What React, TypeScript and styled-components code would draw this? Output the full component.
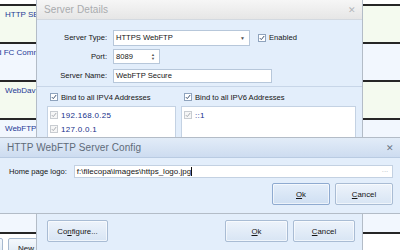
import React from 'react';
import styled, { createGlobalStyle } from 'styled-components';

const GlobalStyle = createGlobalStyle`
  html, body { margin: 0; padding: 0; background: #fff; }
  body {
    font-family: 'Liberation Sans', Arial, sans-serif;
    font-size: 7.6px;
    color: #141414;
    overflow: hidden;
  }
  * { box-sizing: border-box; }
`;

const Stage = styled.div`
  position: relative;
  width: 400px;
  height: 250px;
  overflow: hidden;
  background: #fff;
`;

/* ---------- background grid ---------- */

const Grid = styled.div`
  padding-top: 4px;
`;

const GridBody = styled.div`
  border-bottom: 2px solid #262626;
`;

const GridRow = styled.div<{ $alt?: boolean }>`
  height: 38px;
  border-top: 2px solid #262626;
  background: ${(p) => (p.$alt ? '#f2f7fe' : '#f4faef')};
`;

const GridCell = styled.div<{ $shift?: number }>`
  width: 36px;
  overflow: hidden;
  white-space: nowrap;
  padding-top: 4px;
  line-height: 9px;
  font-size: 8px;
  color: #1f3a96;
  span {
    display: inline-block;
    margin-left: ${(p) => p.$shift ?? 5}px;
  }
`;

const Footer = styled.div`
  display: flex;
  gap: 5px;
  padding-top: 4px;
  margin-left: -25px;
`;

const PlainButton = styled.div`
  width: 28px;
  height: 20px;
  border: 1px solid #a7b9cf;
  border-radius: 2px;
  background: linear-gradient(#f4f8fc, #dbe7f4);
  padding-left: 9px;
  line-height: 20px;
  font-size: 8px;
  &:last-child { width: 50px; }
`;

/* ---------- windows ---------- */

const Window = styled.div<{ $left: number; $top: number; $width: number; $height: number }>`
  position: absolute;
  left: ${(p) => p.$left}px;
  top: ${(p) => p.$top}px;
  width: ${(p) => p.$width}px;
  height: ${(p) => p.$height}px;
  display: flex;
  flex-direction: column;
  background: #e3eefb;
  border: 1px solid #b3bcc7;
`;

const TitleBar = styled.div<{ $active?: boolean }>`
  height: 20px;
  flex: none;
  display: flex;
  align-items: center;
  justify-content: space-between;
  padding: 0 6px 0 7px;
  background: ${(p) =>
    p.$active ? 'linear-gradient(#e2ecf8, #cddcf0)' : 'linear-gradient(#f6f6f6, #e6e6e6)'};
  border-bottom: 1px solid ${(p) => (p.$active ? '#b9cbe2' : '#d3d9e0')};
`;

const Title = styled.div<{ $active?: boolean }>`
  font-size: 10px;
  letter-spacing: 0.1px;
  color: ${(p) => (p.$active ? '#5f6b79' : '#a9abae')};
`;

const CloseX = styled.div<{ $active?: boolean }>`
  font-size: 9px;
  color: ${(p) => (p.$active ? '#6c7684' : '#b3b6ba')};
`;

/* ---------- form controls ---------- */

const FormGrid = styled.div`
  display: grid;
  grid-template-columns: 70px 1fr;
  grid-auto-rows: 19px;
  column-gap: 6px;
  align-items: center;
  padding: 8px 0 1px 0;
`;

const Label = styled.div`
  text-align: right;
`;

const Inline = styled.div`
  display: flex;
  align-items: center;
  gap: 8px;
`;

const Field = styled.div<{ $width: number; $height: number }>`
  width: ${(p) => p.$width}px;
  height: ${(p) => p.$height}px;
  background: #fff;
  border: 1px solid #b7c7da;
  display: flex;
  align-items: center;
  justify-content: space-between;
  padding: 0 4px 0 2px;
`;

const Arrow = styled.span`
  font-size: 5px;
  color: #555;
`;

const Spin = styled.span`
  display: flex;
  flex-direction: column;
  font-size: 4px;
  line-height: 4px;
  color: #555;
`;

const CheckRow = styled.label`
  display: flex;
  align-items: center;
  gap: 3px;
`;

const Box = styled.span<{ $muted?: boolean }>`
  width: 8px;
  height: 8px;
  flex: none;
  border: 1px solid ${(p) => (p.$muted ? '#c8ccd1' : '#8fa3bd')};
  background: ${(p) => (p.$muted ? '#f6f6f6' : '#fff')};
  display: flex;
  align-items: center;
  justify-content: center;
`;

const Check = ({ muted }: { muted?: boolean }) => (
  <Box $muted={muted}>
    <svg width="6" height="6" viewBox="0 0 6 6">
      <path d="M0.8 3.1 L2.3 4.6 L5.2 1" fill="none" stroke={muted ? '#a8adb3' : '#3e5372'} strokeWidth="1" />
    </svg>
  </Box>
);

const Lower = styled.div`
  border-top: 1px solid #c8d6e8;
  display: grid;
  grid-template-columns: 129px 175px;
  column-gap: 5px;
  padding: 4px 0 0 10px;
`;

const Group = styled.div`
  display: flex;
  flex-direction: column;
  gap: 3px;
`;

const GroupHead = styled(CheckRow)`
  height: 12px;
  padding-left: 3px;
`;

const ListBox = styled.div`
  height: 108px;
  background: #fff;
  border: 1px solid #c4d2e3;
  padding: 1px 2px;
`;

const ListItem = styled(CheckRow)`
  height: 14px;
  font-size: 8px;
  letter-spacing: 0.3px;
  color: #16308a;
`;

const ButtonRow = styled.div<{ $pad: string }>`
  display: flex;
  gap: 5px;
  padding: ${(p) => p.$pad};
`;

const Spacer = styled.div`
  flex: 1;
`;

const Button = styled.div<{ $width: number; $focus?: boolean }>`
  width: ${(p) => p.$width}px;
  height: 22px;
  display: flex;
  align-items: center;
  justify-content: center;
  border: 1px solid ${(p) => (p.$focus ? '#8eaad0' : '#a9bcd4')};
  border-radius: 2px;
  background: ${(p) =>
    p.$focus ? 'linear-gradient(#e4eefa, #cfdff2)' : 'linear-gradient(#edf3fb, #d8e5f4)'};
  box-shadow: inset 0 0 0 1px rgba(255, 255, 255, 0.6);
  font-size: 7.8px;
`;

const ConfigBody = styled.div`
  display: flex;
  flex-direction: column;
  gap: 5px;
  padding: 7px 7px 0 9px;
`;

const InputRow = styled.div`
  display: flex;
  align-items: center;
  gap: 7px;
`;

const PathInput = styled.div`
  flex: 1;
  height: 13px;
  background: #fff;
  border: 1px solid #c3d1e2;
  display: flex;
  align-items: center;
  justify-content: space-between;
  padding: 0 4px 0 2px;
  font-size: 8px;
`;

const Caret = styled.span`
  display: inline-block;
  width: 1px;
  height: 9px;
  background: #111;
  vertical-align: middle;
`;

const Dots = styled.span`
  color: #b9c0c9;
  letter-spacing: -0.5px;
`;

// rows 5 and 6 sit fully under the config window
const rows = [
  { text: 'HTTP SER' },
  { text: 'd FC Comm', shift: -3 },
  { text: 'WebDav' },
  { text: 'WebFTP' },
  { text: '' },
  { text: '' },
];

export default function App() {
  return (
    <Stage>
      <GlobalStyle />
      <Grid>
        <GridBody>
          {rows.map((r, i) => (
            <GridRow key={i} $alt={i % 2 === 1}>
              <GridCell $shift={r.shift}>
                <span>{r.text}</span>
              </GridCell>
            </GridRow>
          ))}
        </GridBody>
        <Footer>
          <PlainButton />
          <PlainButton>New</PlainButton>
        </Footer>
      </Grid>

      <Window $left={36} $top={-1} $width={327} $height={262}>
        <TitleBar>
          <Title>Server Details</Title>
          <CloseX>✕</CloseX>
        </TitleBar>
        <FormGrid>
          <Label>Server Type:</Label>
          <Inline>
            <Field $width={137} $height={16}>
              <span>HTTPS WebFTP</span>
              <Arrow>▼</Arrow>
            </Field>
            <CheckRow>
              <Check />
              Enabled
            </CheckRow>
          </Inline>
          <Label>Port:</Label>
          <Field $width={47} $height={15}>
            <span>8089</span>
            <Spin>
              <span>▲</span>
              <span>▼</span>
            </Spin>
          </Field>
          <Label>Server Name:</Label>
          <Field $width={159} $height={14}>
            <span>WebFTP Secure</span>
          </Field>
        </FormGrid>
        <Lower>
          <Group>
            <GroupHead>
              <Check />
              Bind to all IPV4 Addresses
            </GroupHead>
            <ListBox>
              <ListItem>
                <Check muted />
                192.168.0.25
              </ListItem>
              <ListItem>
                <Check muted />
                127.0.0.1
              </ListItem>
            </ListBox>
          </Group>
          <Group>
            <GroupHead>
              <Check />
              Bind to all IPV6 Addresses
            </GroupHead>
            <ListBox>
              <ListItem>
                <Check muted />
                ::1
              </ListItem>
            </ListBox>
          </Group>
        </Lower>
        <ButtonRow $pad="6px 7px 0 10px">
          <Button $width={61}>
            Co<u>n</u>figure...
          </Button>
          <Spacer />
          <Button $width={63}>
            <u>O</u>k
          </Button>
          <Button $width={62}>
            <u>C</u>ancel
          </Button>
        </ButtonRow>
      </Window>

      <Window $left={-1} $top={137} $width={402} $height={77}>
        <TitleBar $active>
          <Title $active>HTTP WebFTP Server Config</Title>
          <CloseX $active>✕</CloseX>
        </TitleBar>
        <ConfigBody>
          <InputRow>
            <span>Home page logo:</span>
            <PathInput>
              <span>
                f:\filecopa\images\https_logo.jpg
                <Caret />
              </span>
              <Dots>···</Dots>
            </PathInput>
          </InputRow>
          <ButtonRow $pad="0">
            <Spacer />
            <Button $width={58} $focus>
              <u>O</u>k
            </Button>
            <Button $width={58}>
              <u>C</u>ancel
            </Button>
          </ButtonRow>
        </ConfigBody>
      </Window>
    </Stage>
  );
}
